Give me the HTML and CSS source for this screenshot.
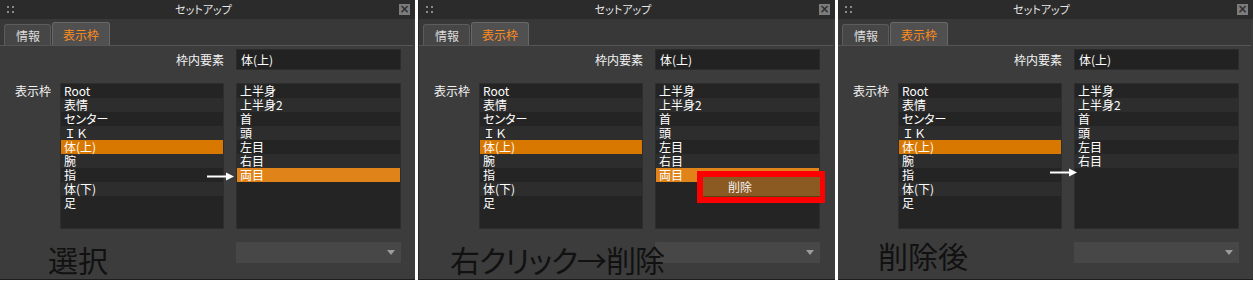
FILE: index.html
```html
<!DOCTYPE html>
<html lang="ja">
<head>
<meta charset="utf-8">
<title>セットアップ</title>
<link rel="stylesheet" href="styles.css">
</head>
<body>
<div class="row">

  <!-- Panel 1 -->
  <section class="panel p1">
    <header class="titlebar">
      <span class="grip"><i></i><i></i><i></i><i></i></span>
      <span class="title">セットアップ</span>
      <span class="close">×</span>
    </header>
    <nav class="tabs">
      <span class="tab">情報</span>
      <span class="tab active">表示枠</span>
    </nav>
    <div class="content">
      <span class="lbl-inner">枠内要素</span>
      <div class="field">体(上)</div>
      <span class="lbl-frame">表示枠</span>
      <ul class="list left">
        <li>Root</li><li>表情</li><li>センター</li><li class="fw">ＩＫ</li><li class="sel">体(上)</li><li>腕</li><li>指</li><li>体(下)</li><li>足</li>
      </ul>
      <ul class="list right">
        <li>上半身</li><li>上半身2</li><li>首</li><li>頭</li><li>左目</li><li>右目</li><li class="sel2">両目</li>
      </ul>
      <div class="caption">選択</div>
      <div class="dropdown"><span class="tri"></span></div>
    </div>
    <svg class="arrow a1" width="27" height="9" viewBox="0 0 27 9"><line x1="0" y1="4.5" x2="20" y2="4.5" stroke="#fff" stroke-width="2"/><polygon points="19,0.5 27,4.5 19,8.5" fill="#fff"/></svg>
  </section>

  <!-- Panel 2 -->
  <section class="panel p2">
    <header class="titlebar">
      <span class="grip"><i></i><i></i><i></i><i></i></span>
      <span class="title">セットアップ</span>
      <span class="close">×</span>
    </header>
    <nav class="tabs">
      <span class="tab">情報</span>
      <span class="tab active">表示枠</span>
    </nav>
    <div class="content">
      <span class="lbl-inner">枠内要素</span>
      <div class="field">体(上)</div>
      <span class="lbl-frame">表示枠</span>
      <ul class="list left">
        <li>Root</li><li>表情</li><li>センター</li><li class="fw">ＩＫ</li><li class="sel">体(上)</li><li>腕</li><li>指</li><li>体(下)</li><li>足</li>
      </ul>
      <ul class="list right">
        <li>上半身</li><li>上半身2</li><li>首</li><li>頭</li><li>左目</li><li>右目</li><li class="sel2">両目</li>
      </ul>
      <div class="caption">右クリック→削除</div>
      <div class="dropdown"><span class="tri"></span></div>
    </div>
    <div class="ctxmenu"><div class="ctxitem">削除</div></div>
  </section>

  <!-- Panel 3 -->
  <section class="panel p3">
    <header class="titlebar">
      <span class="grip"><i></i><i></i><i></i><i></i></span>
      <span class="title">セットアップ</span>
      <span class="close">×</span>
    </header>
    <nav class="tabs">
      <span class="tab">情報</span>
      <span class="tab active">表示枠</span>
    </nav>
    <div class="content">
      <span class="lbl-inner">枠内要素</span>
      <div class="field">体(上)</div>
      <span class="lbl-frame">表示枠</span>
      <ul class="list left">
        <li>Root</li><li>表情</li><li>センター</li><li class="fw">ＩＫ</li><li class="sel">体(上)</li><li>腕</li><li>指</li><li>体(下)</li><li>足</li>
      </ul>
      <ul class="list right">
        <li>上半身</li><li>上半身2</li><li>首</li><li>頭</li><li>左目</li><li>右目</li>
      </ul>
      <div class="caption">削除後</div>
      <div class="dropdown"><span class="tri"></span></div>
    </div>
    <svg class="arrow a3" width="27" height="9" viewBox="0 0 27 9"><line x1="0" y1="4.5" x2="20" y2="4.5" stroke="#fff" stroke-width="2"/><polygon points="19,0.5 27,4.5 19,8.5" fill="#fff"/></svg>
  </section>

</div>
</body>
</html>
```

FILE: styles.css
```css
* { box-sizing: border-box; }

html, body {
  margin: 0;
  padding: 0;
  background: #ffffff;
}

body {
  font-family: "Noto Sans CJK JP", "Noto Sans", sans-serif;
  font-feature-settings: "palt";
  font-size: 12px;
  color: #ffffff;
}

.row {
  display: flex;
  gap: 3px;
  width: 1254px;
  height: 282px;
}

.panel {
  position: relative;
  height: 280px;
  background: #3c3c3c;
  border-bottom: 1px solid #1e1e1e;
  display: flex;
  flex-direction: column;
}
.p1 { width: 415px; }
.p2 { width: 417px; border-left: 1px solid #262626; }
.p3 { width: 415px; }

/* title bar */
.titlebar {
  height: 19px;
  background: #2b2b2b;
  display: flex;
  align-items: center;
  position: relative;
  flex: none;
}
.grip {
  margin-left: 7px;
  width: 7px;
  height: 7px;
  display: grid;
  grid-template-columns: 2px 2px;
  grid-template-rows: 2px 2px;
  column-gap: 3px;
  row-gap: 3px;
}
.grip i {
  display: block;
  background: #8a8a8a;
}
.title {
  flex: 1;
  text-align: center;
  font-size: 11px;
  line-height: 19px;
  color: #e6e6e6;
  margin-right: 6px;
}
.close {
  width: 11px;
  height: 11px;
  margin-right: 5px;
  background: #7c7c7c;
  color: #2e2e2e;
  font-family: "DejaVu Sans", sans-serif;
  font-weight: bold;
  font-size: 12px;
  line-height: 11px;
  text-align: center;
}

/* tabs */
.tabs {
  height: 27px;
  flex: none;
  display: flex;
  align-items: flex-end;
  padding-left: 4px;
  margin-right: 2px;
  border-bottom: 1px solid #555555;
  background: #383838;
}
.tab {
  height: 21px;
  padding: 0 10px 0 11px;
  background: #464646;
  border: 1px solid #5c5c5c;
  border-bottom: none;
  border-radius: 3px 3px 0 0;
  color: #dcdcdc;
  font-size: 12px;
  line-height: 21px;
  margin-right: 1px;
}
.tab.active {
  height: 23px;
  line-height: 23px;
  padding: 0 10px;
  background: #505050;
  border-color: #686868;
  color: #ff8c1c;
}

/* content */
.content {
  display: grid;
  grid-template-columns: 60px 164px 12px 165px;
  grid-template-rows: 21px 146px 40px;
  row-gap: 13px;
  padding-top: 3px;
}
.lbl-inner {
  grid-column: 1 / 3;
  grid-row: 1;
  justify-self: end;
  align-self: center;
  color: #f2f2f2;
  line-height: 14px;
}
.field {
  grid-column: 4;
  grid-row: 1;
  background: #222222;
  border: 1px solid #2c2c2c;
  padding-left: 4px;
  line-height: 19px;
  color: #ffffff;
}
.lbl-frame {
  grid-column: 1;
  grid-row: 2;
  padding-left: 15px;
  padding-top: 1px;
  line-height: 14px;
  color: #f2f2f2;
}
.list {
  grid-row: 2;
  margin: 0;
  padding: 0;
  list-style: none;
  background: #242424;
  border: 1px solid #2e2e2e;
}
.list.left { grid-column: 2; }
.list.right { grid-column: 4; }
.list li {
  height: 14px;
  line-height: 14px;
  padding-left: 3px;
  color: #ffffff;
  background: #242424;
}
.list li:nth-child(even) { background: #2d2d2d; }
.list li.sel { background: #d97800; }
.list li.sel2 { background: #e0841a; }
.list li.fw { font-feature-settings: normal; }

.caption {
  grid-column: 1 / 5;
  grid-row: 3;
  position: relative;
  z-index: 1;
  font-size: 30px;
  line-height: 30px;
  color: #111111;
  font-feature-settings: "palt";
}
.p1 .caption { padding-left: 48px; margin-top: 2px; }
.p2 .caption { padding-left: 31px; margin-top: 2px; letter-spacing: -1px; }
.p3 .caption { padding-left: 40px; margin-top: -2px; }

.dropdown {
  grid-column: 4;
  grid-row: 3;
  height: 21px;
  background: #474747;
  position: relative;
}
.tri {
  position: absolute;
  right: 6px;
  top: 8px;
  width: 0;
  height: 0;
  border-left: 4px solid transparent;
  border-right: 4px solid transparent;
  border-top: 5px solid #9c9c9c;
}

/* overlays */
.arrow {
  position: absolute;
}
.a1 { left: 207px; top: 172px; }
.a3 { left: 212px; top: 168px; }

.ctxmenu {
  position: absolute;
  left: 278px;
  top: 171px;
  width: 128px;
  height: 32px;
  border: 6px solid #ff0000;
  border-right-width: 5px;
}
.ctxitem {
  height: 100%;
  background: #8b5a22;
  border-bottom: 1px solid #5e3c14;
  color: #f2f2f2;
  padding-left: 25px;
  line-height: 19px;
  font-size: 12px;
}
```
